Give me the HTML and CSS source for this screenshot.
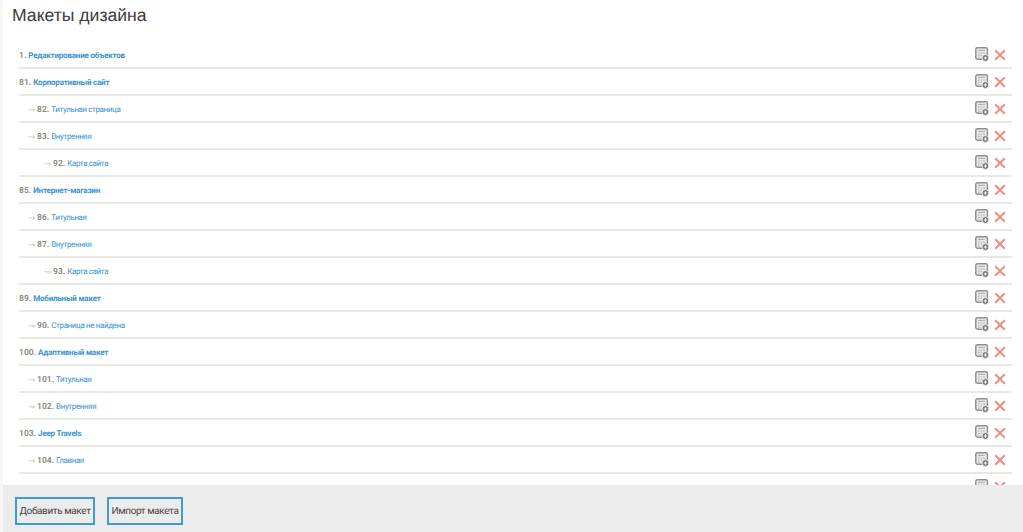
FILE: index.html
```html
<!DOCTYPE html>
<html>
<head>
    <meta charset="utf-8">
    <meta name="viewport" content="width=device-width, initial-scale=1.0">
    <link rel="stylesheet" href="styles.css">
</head>
<body>
    <svg class="defs" width="0" height="0">
        <symbol id="i-add" viewBox="0 0 14 15">
            <rect x="0.8" y="0.8" width="11.6" height="11.4" rx="1.6" fill="#ededed" stroke="#8f8f8f" stroke-width="1.5"/>
            <path d="M3 3.4h7" stroke="#b5b5b5" stroke-width="1.4" fill="none"/>
            <path d="M3 6h1.5M5.5 6h1.5M8 6h2M3 8.2h1.5M5.5 8.2h1.5M3 10.2h1.5M5.5 10.2h1" stroke="#a8a8a8" stroke-width="1" fill="none"/>
            <circle cx="10.4" cy="11" r="3.4" fill="#707070" stroke="#fff" stroke-width="0.8"/>
            <path d="M8.7 11h3.4M10.4 9.3v3.4" stroke="#fff" stroke-width="1" fill="none"/>
        </symbol>
        <symbol id="i-del" viewBox="0 0 12 12">
            <path d="M1.2 1.2L10.8 10.8M10.8 1.2L1.2 10.8" stroke="#ea9389" stroke-width="2.2" fill="none"/>
        </symbol>
        <symbol id="i-arrow" viewBox="0 0 8 6">
            <path d="M0.5 2.5C2 2 3 3 4 3H7.5M5.6 1.2L7.6 3L5.6 4.8" stroke="#b4b4b4" stroke-width="0.8" fill="none"/>
        </symbol>
    </svg>
    <div class="page">
        <h1 class="title">Макеты дизайна</h1>

        <div class="list">
            <div class="row">
                <span class="row-name top"><b class="num">1.</b> <a href="#">Редактирование объектов</a></span>
                <span class="row-actions"><svg class="icon-add"><use href="#i-add"/></svg><svg class="icon-del"><use href="#i-del"/></svg></span>
            </div>
            <div class="row">
                <span class="row-name top"><b class="num">81.</b> <a href="#">Корпоративный сайт</a></span>
                <span class="row-actions"><svg class="icon-add"><use href="#i-add"/></svg><svg class="icon-del"><use href="#i-del"/></svg></span>
            </div>
            <div class="row">
                <span class="row-name level-1"><svg class="arrow"><use href="#i-arrow"/></svg><b class="num">82.</b> <a href="#">Титульная страница</a></span>
                <span class="row-actions"><svg class="icon-add"><use href="#i-add"/></svg><svg class="icon-del"><use href="#i-del"/></svg></span>
            </div>
            <div class="row">
                <span class="row-name level-1"><svg class="arrow"><use href="#i-arrow"/></svg><b class="num">83.</b> <a href="#">Внутренняя</a></span>
                <span class="row-actions"><svg class="icon-add"><use href="#i-add"/></svg><svg class="icon-del"><use href="#i-del"/></svg></span>
            </div>
            <div class="row">
                <span class="row-name level-2"><svg class="arrow"><use href="#i-arrow"/></svg><b class="num">92.</b> <a href="#">Карта сайта</a></span>
                <span class="row-actions"><svg class="icon-add"><use href="#i-add"/></svg><svg class="icon-del"><use href="#i-del"/></svg></span>
            </div>
            <div class="row">
                <span class="row-name top"><b class="num">85.</b> <a href="#">Интернет-магазин</a></span>
                <span class="row-actions"><svg class="icon-add"><use href="#i-add"/></svg><svg class="icon-del"><use href="#i-del"/></svg></span>
            </div>
            <div class="row">
                <span class="row-name level-1"><svg class="arrow"><use href="#i-arrow"/></svg><b class="num">86.</b> <a href="#">Титульная</a></span>
                <span class="row-actions"><svg class="icon-add"><use href="#i-add"/></svg><svg class="icon-del"><use href="#i-del"/></svg></span>
            </div>
            <div class="row">
                <span class="row-name level-1"><svg class="arrow"><use href="#i-arrow"/></svg><b class="num">87.</b> <a href="#">Внутренняя</a></span>
                <span class="row-actions"><svg class="icon-add"><use href="#i-add"/></svg><svg class="icon-del"><use href="#i-del"/></svg></span>
            </div>
            <div class="row">
                <span class="row-name level-2"><svg class="arrow"><use href="#i-arrow"/></svg><b class="num">93.</b> <a href="#">Карта сайта</a></span>
                <span class="row-actions"><svg class="icon-add"><use href="#i-add"/></svg><svg class="icon-del"><use href="#i-del"/></svg></span>
            </div>
            <div class="row">
                <span class="row-name top"><b class="num">89.</b> <a href="#">Мобильный макет</a></span>
                <span class="row-actions"><svg class="icon-add"><use href="#i-add"/></svg><svg class="icon-del"><use href="#i-del"/></svg></span>
            </div>
            <div class="row">
                <span class="row-name level-1"><svg class="arrow"><use href="#i-arrow"/></svg><b class="num">90.</b> <a href="#">Страница не найдена</a></span>
                <span class="row-actions"><svg class="icon-add"><use href="#i-add"/></svg><svg class="icon-del"><use href="#i-del"/></svg></span>
            </div>
            <div class="row">
                <span class="row-name top"><b class="num">100.</b> <a href="#">Адаптивный макет</a></span>
                <span class="row-actions"><svg class="icon-add"><use href="#i-add"/></svg><svg class="icon-del"><use href="#i-del"/></svg></span>
            </div>
            <div class="row">
                <span class="row-name level-1"><svg class="arrow"><use href="#i-arrow"/></svg><b class="num">101.</b> <a href="#">Титульная</a></span>
                <span class="row-actions"><svg class="icon-add"><use href="#i-add"/></svg><svg class="icon-del"><use href="#i-del"/></svg></span>
            </div>
            <div class="row">
                <span class="row-name level-1"><svg class="arrow"><use href="#i-arrow"/></svg><b class="num">102.</b> <a href="#">Внутренняя</a></span>
                <span class="row-actions"><svg class="icon-add"><use href="#i-add"/></svg><svg class="icon-del"><use href="#i-del"/></svg></span>
            </div>
            <div class="row">
                <span class="row-name top"><b class="num">103.</b> <a href="#">Jeep Travels</a></span>
                <span class="row-actions"><svg class="icon-add"><use href="#i-add"/></svg><svg class="icon-del"><use href="#i-del"/></svg></span>
            </div>
            <div class="row">
                <span class="row-name level-1"><svg class="arrow"><use href="#i-arrow"/></svg><b class="num">104.</b> <a href="#">Главная</a></span>
                <span class="row-actions"><svg class="icon-add"><use href="#i-add"/></svg><svg class="icon-del"><use href="#i-del"/></svg></span>
            </div>
            <div class="row">
                <span class="row-name level-1"></span>
                <span class="row-actions"><svg class="icon-add"><use href="#i-add"/></svg><svg class="icon-del"><use href="#i-del"/></svg></span>
            </div>
        </div>

        <div class="footer">
            <button class="btn">Добавить макет</button>
            <button class="btn">Импорт макета</button>
        </div>
    </div>
</body>
</html>
```

FILE: styles.css
```css
* {
    box-sizing: border-box;
}

html, body {
    height: 100%;
    margin: 0;
    overflow: hidden;
}

body {
    background: #f6f6f6;
    padding-left: 3px;
    font-family: Roboto, Lato, sans-serif;
    text-rendering: geometricPrecision;
    color: #444;
}

.defs {
    display: block;
    height: 0;
}

.page {
    display: flex;
    flex-direction: column;
    height: 100%;
    background: #fff;
}

.title {
    margin: 0;
    padding: 5px 0 0 9px;
    height: 42px;
    flex-shrink: 0;
    font-family: "Liberation Sans", Arial, sans-serif;
    font-size: 17.6px;
    font-weight: 400;
    line-height: 21px;
    color: #3c3c3c;
}

.list {
    flex: 1;
    min-height: 0;
    overflow: hidden;
    padding: 0 11px 0 16px;
}

.row {
    display: flex;
    align-items: center;
    justify-content: space-between;
    height: 27px;
    border-bottom: 2px solid #e9e9e4;
}

.row-name {
    display: flex;
    align-items: baseline;
    gap: 1px;
    padding-top: 2px;
    font-size: 8px;
    white-space: nowrap;
}

.row-name a {
    color: #3a93cf;
    letter-spacing: -0.38px;
    text-decoration: none;
}

.row-name.top a {
    font-weight: 700;
    letter-spacing: -0.2px;
}

.num {
    color: #8f8f86;
    font-size: 8.5px;
    font-weight: 700;
    margin-right: 1px;
}

.level-1 {
    padding-left: 9px;
}

.level-2 {
    padding-left: 25px;
}

.arrow {
    align-self: center;
    width: 7px;
    height: 6px;
    margin-right: 1px;
}

.row-actions {
    display: flex;
    align-items: center;
    gap: 5px;
    padding-right: 6px;
}

.icon-add {
    width: 14px;
    height: 15px;
}

.icon-del {
    width: 12px;
    height: 12px;
}

.footer {
    display: flex;
    flex-shrink: 0;
    gap: 12px;
    height: 47px;
    padding: 12px 0 0 12px;
    background: #ececec;
}

.btn {
    height: 28px;
    padding: 0 2.5px;
    background: #ececec;
    border: 2px solid #3f9ad6;
    font-family: Roboto, Lato, sans-serif;
    font-size: 10px;
    letter-spacing: -0.4px;
    text-rendering: geometricPrecision;
    color: #444;
}
```
